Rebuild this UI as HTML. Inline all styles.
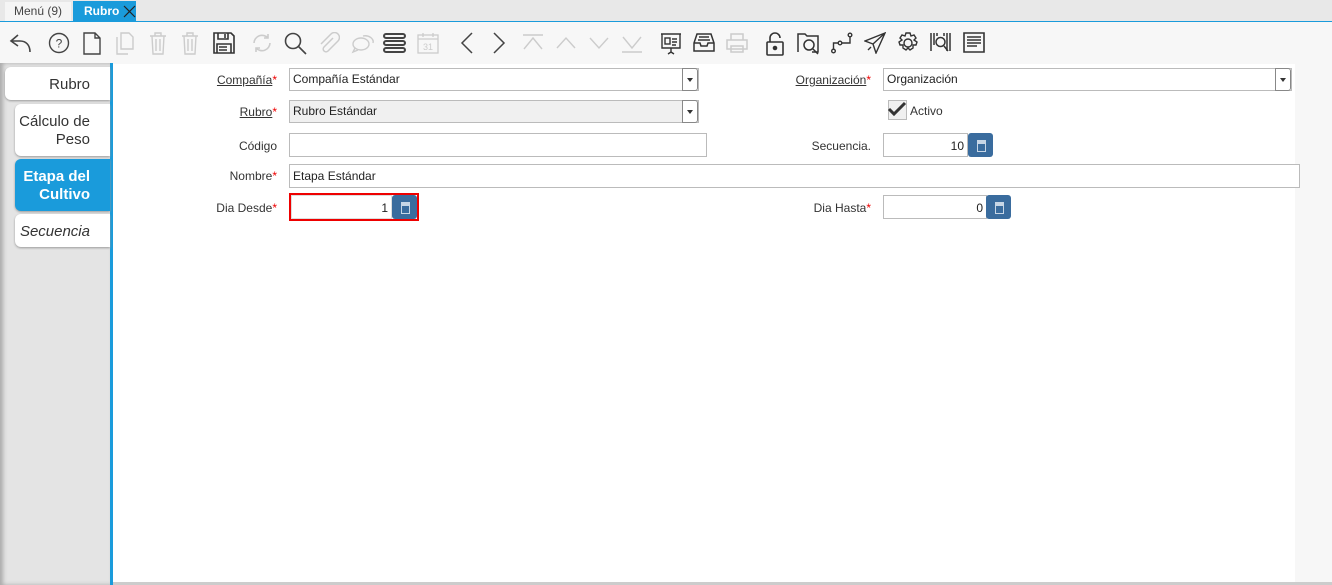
<!DOCTYPE html>
<html><head><meta charset="utf-8"><style>
*{box-sizing:border-box;margin:0;padding:0}
body{width:1332px;height:585px;overflow:hidden;background:#f7f7f7;font-family:"Liberation Sans","DejaVu Sans",sans-serif;font-size:12px;color:#333;position:relative}
.abs{position:absolute}
#tabbar{left:0;top:0;width:1332px;height:22px;background:#e8e8e8;border-bottom:1px solid #1a9bdb}
.t1{left:5px;top:2px;width:66px;height:19px;background:#f5f5f5;text-align:center;line-height:19px;color:#444;font-size:12px}
.t2{left:73px;top:1px;width:63px;height:21px;background:#1a9bdb;color:#fff;font-weight:bold;line-height:20px;padding-left:11px;font-size:12px}
#tb{left:0;top:23px;width:1332px;height:40px;background:#f7f7f7}
#tb svg{position:absolute;top:9px}
#left{left:0;top:63px;width:110px;height:522px;background:#e4e4e4;box-shadow:inset 3px 0 4px #aaa}
#bl{left:110px;top:63px;width:3px;height:522px;background:#1a9bdb}
#form{left:113px;top:64px;width:1182px;height:518px;background:#fff}
#bot{left:113px;top:582px;width:1219px;height:3px;background:#ccc}
.vt{background:#fff;border-radius:6px 0 0 6px;text-align:right;padding-right:20px;font-size:15px;color:#333;box-shadow:0 1px 2px #999}
.lbl{text-align:right;width:200px;font-size:12px;color:#333}
.lbl u{text-decoration:underline}
.req{color:#e00}
.in{background:#fff;border:1px solid #bbb;font-size:12px;padding-left:3px;line-height:21px;color:#222}
.dd{position:absolute;right:0;top:-1px;width:16px;height:23px;border:1px solid #888;border-radius:0 3px 3px 0;background:#fff}
.dd:after{content:"";position:absolute;left:4px;top:9px;border:3.5px solid transparent;border-top:4px solid #333}
.btn{background:#3a6c9e;border-radius:3px}
.btn:after{content:"";position:absolute;left:9px;top:7px;width:7px;height:10px;border:1px solid #c7d6e6;background:linear-gradient(#c7d6e6 0 3px,transparent 3px)}
</style></head><body>
<div id="tabbar" class="abs"></div>
<div class="abs t1">Menú (9)</div>
<div class="abs t2">Rubro<svg style="position:absolute;left:50px;top:4px" width="13" height="13" viewBox="0 0 13 13"><path d="M1 1L12 12M12 1L1 12" stroke="#222" stroke-width="1.2"/></svg></div>
<div id="tb" class="abs">
<svg style="left:8px" width="26" height="24" viewBox="0 0 26 24" fill="none" stroke="#444" stroke-width="1.6"><path d="M10 3L3 9l7 5M3 9h9c6 0 10 4 10 11"/></svg>
<svg style="left:48px" width="22" height="22" viewBox="0 0 22 22" fill="none" stroke="#444" stroke-width="1.4"><circle cx="11" cy="11" r="9.5"/><text x="11" y="15.5" font-size="12" text-anchor="middle" fill="#444" stroke="none" font-family="Liberation Sans">?</text></svg>
<svg style="left:83px" width="18" height="23" viewBox="0 0 18 23" fill="none" stroke="#444" stroke-width="1.4"><path d="M1 1h11l5 5v16H1zM12 1v5h5"/></svg>
<svg style="left:116px" width="18" height="23" viewBox="0 0 18 23" fill="none" stroke="#ccc" stroke-width="1.4"><path d="M5 1h8l4 4v12H5zM1 5v17h11"/></svg>
<svg style="left:149px" width="18" height="23" viewBox="0 0 18 23" fill="none" stroke="#ccc" stroke-width="1.4"><path d="M1 4h16M6 4V1h6v3M3 4l1 18h10l1-18M7 7v12M11 7v12"/></svg>
<svg style="left:181px" width="18" height="23" viewBox="0 0 18 23" fill="none" stroke="#ccc" stroke-width="1.4"><path d="M1 4h16M6 4V1h6v3M3 4l1 18h10l1-18M7 7v12M11 7v12"/></svg>
<svg style="left:213px" width="22" height="22" viewBox="0 0 22 22" fill="none" stroke="#333" stroke-width="1.6"><path d="M1 1h17l3 3v17H1zM5 1v6h10V1M12 2v4M4 12h14v9H4zM6 15h8M6 18h8"/></svg>
<svg style="left:251px" width="22" height="22" viewBox="0 0 22 22" fill="none" stroke="#ccc" stroke-width="1.6"><path d="M3 11a8 8 0 0 1 14-5M19 11a8 8 0 0 1-14 5M17 2v4h-4M5 20v-4h4"/></svg>
<svg style="left:284px" width="23" height="23" viewBox="0 0 23 23" fill="none" stroke="#444" stroke-width="1.6"><circle cx="9" cy="9" r="7.5"/><path d="M14.5 14.5L22 22"/></svg>
<svg style="left:318px" width="22" height="22" viewBox="0 0 22 22" fill="none" stroke="#ccc" stroke-width="1.5"><path d="M15 6l-9 9a2.5 2.5 0 0 0 4 4l10-10a4.5 4.5 0 0 0-7-7L3 12"/></svg>
<svg style="left:351px" width="24" height="22" viewBox="0 0 24 22" fill="none" stroke="#ccc" stroke-width="1.4"><ellipse cx="10" cy="12" rx="8" ry="6"/><path d="M12 4a8 6 0 0 1 10 7"/><path d="M4 16l-2 4 5-2"/></svg>
<svg style="left:383px" width="23" height="22" viewBox="0 0 23 22" fill="none" stroke="#444" stroke-width="2"><rect x="1" y="2" width="21" height="4" rx="2"/><rect x="1" y="9" width="21" height="4" rx="2"/><rect x="1" y="16" width="21" height="4" rx="2"/></svg>
<svg style="left:417px" width="22" height="22" viewBox="0 0 22 22" fill="none" stroke="#ccc" stroke-width="1.3"><rect x="1" y="3" width="20" height="18"/><path d="M1 7h20M6 1v4M16 1v4"/><text x="11" y="18" font-size="9" text-anchor="middle" fill="#ccc" stroke="none" font-family="Liberation Sans">31</text></svg>
<svg style="left:460px" width="14" height="22" viewBox="0 0 14 22" fill="none" stroke="#444" stroke-width="1.5"><path d="M12 1L2 11l10 10"/></svg>
<svg style="left:492px" width="14" height="22" viewBox="0 0 14 22" fill="none" stroke="#444" stroke-width="1.5"><path d="M2 1l10 10L2 21"/></svg>
<svg style="left:522px" width="22" height="22" viewBox="0 0 22 22" fill="none" stroke="#ccc" stroke-width="1.4"><path d="M1 3h20M2 17l9-11 9 11"/></svg>
<svg style="left:555px" width="22" height="22" viewBox="0 0 22 22" fill="none" stroke="#ccc" stroke-width="1.4"><path d="M2 16l9-10 9 10"/></svg>
<svg style="left:588px" width="22" height="22" viewBox="0 0 22 22" fill="none" stroke="#ccc" stroke-width="1.4"><path d="M2 6l9 10 9-10"/></svg>
<svg style="left:621px" width="22" height="22" viewBox="0 0 22 22" fill="none" stroke="#ccc" stroke-width="1.4"><path d="M2 5l9 11 9-11M1 20h20"/></svg>
<svg style="left:660px" width="22" height="23" viewBox="0 0 22 23" fill="none" stroke="#333" stroke-width="1.4"><path d="M1 2h20M2 2v14h18V2M11 16v4M8 22l3-2 3 2"/><rect x="5" y="6" width="5" height="6"/><path d="M12 7h5M12 10h5M12 13h4"/></svg>
<svg style="left:693px" width="22" height="22" viewBox="0 0 22 22" fill="none" stroke="#333" stroke-width="1.5"><path d="M4 2h14l3 9v8H1v-8zM1 11h6l1 3h6l1-3h6M6 5h10M5 8h12"/></svg>
<svg style="left:726px" width="22" height="22" viewBox="0 0 22 22" fill="none" stroke="#ccc" stroke-width="1.5"><path d="M5 8V2h12v6M1 8h20v9H1zM5 14h12v6H5z"/></svg>
<svg style="left:766px" width="18" height="24" viewBox="0 0 18 24" fill="none" stroke="#333" stroke-width="1.6"><path d="M4 10V6a5 5 0 0 1 10 0"/><rect x="1" y="10" width="16" height="13" rx="1"/><circle cx="9" cy="16" r="1.5" fill="#333"/></svg>
<svg style="left:797px" width="24" height="24" viewBox="0 0 24 24" fill="none" stroke="#333" stroke-width="1.5"><path d="M1 20V2h7l2 2h11v16h-6"/><circle cx="12" cy="13" r="5"/><path d="M16 17l5 5"/></svg>
<svg style="left:831px" width="22" height="22" viewBox="0 0 22 22" fill="none" stroke="#333" stroke-width="1.4"><circle cx="2.5" cy="19" r="1.8"/><circle cx="9" cy="11" r="1.8"/><circle cx="19" cy="3" r="1.8"/><path d="M2.5 17v-6h5M11 11h8V5"/></svg>
<svg style="left:864px" width="22" height="22" viewBox="0 0 22 22" fill="none" stroke="#333" stroke-width="1.4"><path d="M21 1L1 9l8 3 3 9zM21 1L9 12M7 15l-3 3"/></svg>
<svg style="left:897px" width="22" height="22" viewBox="0 0 22 22" fill="none" stroke="#333" stroke-width="1.4"><circle cx="11" cy="11" r="4"/><path d="M9 1h4l1 3 3-1 2 3-2 2 3 2-1 3-3 0 0 3-3 2-2-2-2 2-3-2 0-3-3 0-1-3 3-2-2-2 2-3 3 1z"/></svg>
<svg style="left:930px" width="22" height="22" viewBox="0 0 22 22" fill="none" stroke="#333" stroke-width="1.5"><path d="M1 1v18M4 1v12M17 1v18M20 1v18M7 1v3M14 1v3"/><circle cx="10.5" cy="10" r="4.5"/><path d="M14 14l4 5"/></svg>
<svg style="left:963px" width="22" height="22" viewBox="0 0 22 22" fill="none" stroke="#333" stroke-width="1.6"><path d="M1 1h20v19H1zM4 5h14M4 8h14M4 11h14M4 14h10"/></svg>
</div>
<div id="left" class="abs"></div>
<div id="bl" class="abs"></div>
<div id="form" class="abs"></div>
<div id="bot" class="abs"></div>
<div class="abs vt" style="left:5px;top:67px;width:105px;height:33px;line-height:35px">Rubro</div>
<div class="abs vt" style="left:15px;top:104px;width:95px;height:52px;line-height:18px;padding-top:9px">Cálculo de<br>Peso</div>
<div class="abs vt" style="left:15px;top:159px;width:95px;height:52px;line-height:18px;padding-top:9px;background:#1a9bdb;color:#fff;font-weight:bold">Etapa del<br>Cultivo</div>
<div class="abs vt" style="left:15px;top:214px;width:95px;height:33px;line-height:35px;font-style:italic">Secuencia</div>

<div class="abs lbl" style="left:77px;top:73px"><u>Compañía</u><span class="req">*</span></div>
<div class="abs in" style="left:289px;top:68px;width:410px;height:23px">Compañía Estándar<div class="dd"></div></div>
<div class="abs lbl" style="left:77px;top:105px"><u>Rubro</u><span class="req">*</span></div>
<div class="abs in" style="left:289px;top:100px;width:410px;height:23px;background:#f0f0f0">Rubro Estándar<div class="dd"></div></div>
<div class="abs lbl" style="left:77px;top:139px">Código</div>
<div class="abs in" style="left:289px;top:133px;width:418px;height:24px"></div>
<div class="abs lbl" style="left:77px;top:169px">Nombre<span class="req">*</span></div>
<div class="abs in" style="left:289px;top:164px;width:1011px;height:24px;line-height:23px">Etapa Estándar</div>
<div class="abs lbl" style="left:77px;top:201px">Dia Desde<span class="req">*</span></div>
<div class="abs" style="left:289px;top:193px;width:130px;height:28px;border:2px solid #e00"></div>
<div class="abs in" style="left:291px;top:195px;width:101px;height:24px;line-height:25px;text-align:right;padding-right:3px;border-color:#ddd">1</div>
<div class="abs btn" style="left:392px;top:195px;width:25px;height:24px"></div>

<div class="abs lbl" style="left:671px;top:73px"><u>Organización</u><span class="req">*</span></div>
<div class="abs in" style="left:883px;top:68px;width:409px;height:23px">Organización<div class="dd"></div></div>
<div class="abs" style="left:888px;top:100px;width:19px;height:20px;border:1px solid #bbb;background:#f0f0f0"></div>
<svg class="abs" style="left:887px;top:101px" width="20" height="16" viewBox="0 0 20 16"><path d="M2 8l5 5L18 2" fill="none" stroke="#333" stroke-width="3"/></svg>
<div class="abs" style="left:910px;top:104px;font-size:12px">Activo</div>
<div class="abs lbl" style="left:671px;top:139px">Secuencia.</div>
<div class="abs in" style="left:883px;top:133px;width:85px;height:24px;line-height:24px;text-align:right;padding-right:3px">10</div>
<div class="abs btn" style="left:968px;top:133px;width:25px;height:24px"></div>
<div class="abs lbl" style="left:671px;top:201px">Dia Hasta<span class="req">*</span></div>
<div class="abs in" style="left:883px;top:195px;width:104px;height:24px;line-height:25px;text-align:right;padding-right:3px">0</div>
<div class="abs btn" style="left:986px;top:195px;width:25px;height:24px"></div>
</body></html>
